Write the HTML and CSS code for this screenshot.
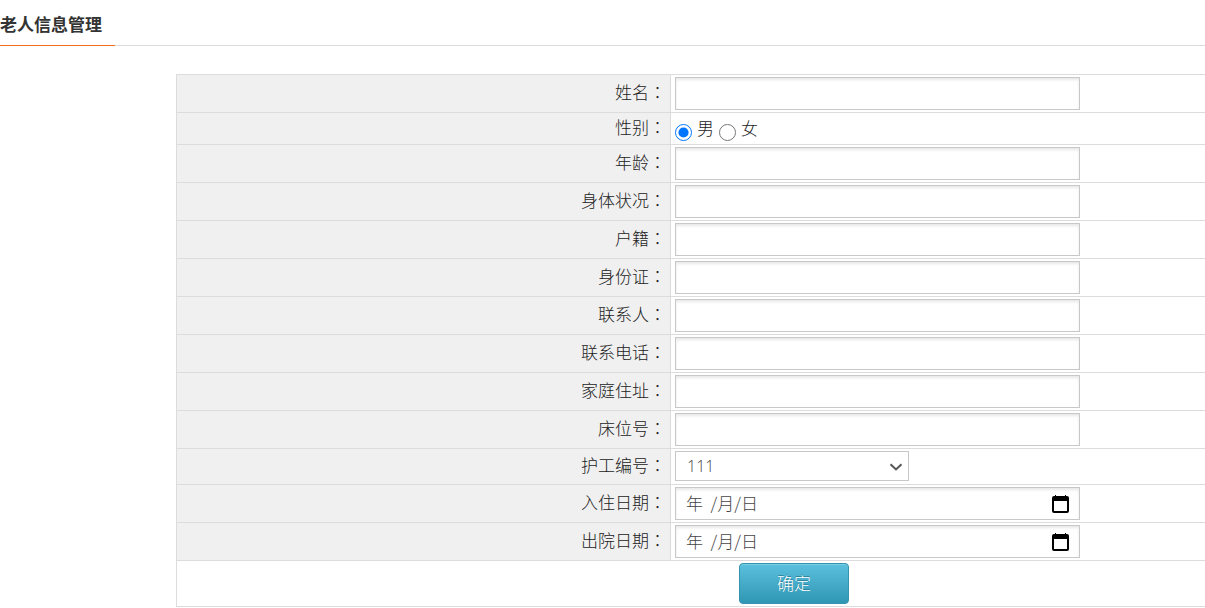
FILE: index.html
```html
<!DOCTYPE html>
<html lang="zh-CN">
<head>
<meta charset="utf-8">
<title>老人信息管理</title>
<link rel="stylesheet" href="styles.css">
</head>
<body>
<header class="page-head"><h1 class="page-title">老人信息管理</h1></header>
<form class="form-area">
<table class="form-table">
<tr><th class="label"><label for="name">姓名<span class="colon" lang="zh-TW">：</span></label></th><td><input class="field" id="name" type="text"></td></tr>
<tr class="radio-row"><th class="label"><span id="sex">性别<span class="colon" lang="zh-TW">：</span></span></th><td><div class="radios" role="radiogroup" aria-labelledby="sex"><input class="radio" id="male" type="radio" name="sex" checked><label for="male">男</label><input class="radio" id="female" type="radio" name="sex"><label for="female">女</label></div></td></tr>
<tr><th class="label"><label for="age">年龄<span class="colon" lang="zh-TW">：</span></label></th><td><input class="field" id="age" type="text"></td></tr>
<tr><th class="label"><label for="health">身体状况<span class="colon" lang="zh-TW">：</span></label></th><td><input class="field" id="health" type="text"></td></tr>
<tr><th class="label"><label for="origin">户籍<span class="colon" lang="zh-TW">：</span></label></th><td><input class="field" id="origin" type="text"></td></tr>
<tr><th class="label"><label for="idcard">身份证<span class="colon" lang="zh-TW">：</span></label></th><td><input class="field" id="idcard" type="text"></td></tr>
<tr><th class="label"><label for="contact">联系人<span class="colon" lang="zh-TW">：</span></label></th><td><input class="field" id="contact" type="text"></td></tr>
<tr><th class="label"><label for="phone">联系电话<span class="colon" lang="zh-TW">：</span></label></th><td><input class="field" id="phone" type="text"></td></tr>
<tr><th class="label"><label for="address">家庭住址<span class="colon" lang="zh-TW">：</span></label></th><td><input class="field" id="address" type="text"></td></tr>
<tr><th class="label"><label for="bed">床位号<span class="colon" lang="zh-TW">：</span></label></th><td><input class="field" id="bed" type="text"></td></tr>
<tr><th class="label"><label for="worker">护工编号<span class="colon" lang="zh-TW">：</span></label></th><td><div class="select-box"><select class="select" id="worker"><option>111</option></select><svg class="chevron" viewBox="0 0 14 8" aria-hidden="true"><path d="M1.500 1.200 7 6.400l5.500-5.200" fill="none" stroke="#555" stroke-width="2"/></svg></div></td></tr>
<tr><th class="label"><label for="checkin">入住日期<span class="colon" lang="zh-TW">：</span></label></th><td><div class="field date"><input class="date-text" id="checkin" type="text" value="年&nbsp; /月/日"><button class="pick" type="button" aria-label="选择入住日期"><svg class="cal" viewBox="0 0 17 19" aria-hidden="true"><path fill-rule="evenodd" d="M3 1h1v1h9V1h1v1h1q2 0 2 2v13q0 2-2 2H2q-2 0-2-2V4q0-2 2-2h1zM2 7v10h13V7z"/></svg></button></div></td></tr>
<tr><th class="label"><label for="checkout">出院日期<span class="colon" lang="zh-TW">：</span></label></th><td><div class="field date"><input class="date-text" id="checkout" type="text" value="年&nbsp; /月/日"><button class="pick" type="button" aria-label="选择出院日期"><svg class="cal" viewBox="0 0 17 19" aria-hidden="true"><path fill-rule="evenodd" d="M3 1h1v1h9V1h1v1h1q2 0 2 2v13q0 2-2 2H2q-2 0-2-2V4q0-2 2-2h1zM2 7v10h13V7z"/></svg></button></div></td></tr>
<tr><td class="actions" colspan="2"><button class="submit" type="submit">确定</button></td></tr>
</table>
</form>
</body>
</html>
```
FILE: styles.css
```css
* { box-sizing: border-box; }
body {
  margin: 0;
  background: #fff;
  color: #222;
  font: 300 17px/24px "Noto Sans CJK SC", sans-serif;
}
.page-head {
  display: flex;
  height: 46px;
  margin-bottom: 28px;
  box-shadow: inset 0 -1px #dcdcdc;
}
.page-title {
  width: 115px;
  margin: 0;
  padding-top: 12px;
  border-bottom: 1px solid #f26c1d;
  color: #333;
  font-size: 17px;
  line-height: 24px;
  font-weight: 700;
  white-space: nowrap;
}
.form-area { margin-left: 176px; overflow: hidden; }
/* The table is wider than its column and runs off the right edge. */
.form-table {
  width: 120%;
  min-width: 1236px;
  border-collapse: collapse;
  table-layout: fixed;
}
.form-table th,
.form-table td {
  padding: 2px 4px;
  border: 1px solid #dcdcdc;
  vertical-align: middle;
}
.form-table .label {
  width: 40%;
  padding: 0 4px 3px 5px;
  background: #f0f0f0;
  font-weight: 300;
  line-height: 24px;
  text-align: right;
}
.colon { font-family: "Noto Sans CJK TC", sans-serif; }
.field {
  display: block;
  width: 405px;
  height: 33px;
  padding: 0 10px;
  border: 1px solid #c8c8c8;
  background: #fff;
  box-shadow: inset 0 2px 3px #e8e8e8;
  color: #444;
  font: inherit;
}
.radio-row { height: 32px; }
.radios { display: flex; align-items: center; height: 26px; }
.radio { width: 17px; height: 17px; margin: 7px 5px 0 0; }
.radios label { margin-right: 5px; padding-bottom: 2px; }
.select-box { position: relative; width: 234px; height: 31px; }
.select {
  display: block;
  width: 100%;
  height: 30px;
  padding: 0 11px;
  appearance: none;
  border: 1px solid #c8c8c8;
  border-radius: 0;
  background: #fff;
  color: #444;
  font: 300 16px/24px "Open Sans", "Noto Sans CJK SC", sans-serif;
}
.chevron { position: absolute; top: 12px; right: 6px; width: 14px; height: 8px; pointer-events: none; }
.date { display: flex; align-items: center; }
.date-text {
  flex: 1;
  min-width: 0;
  padding: 0 0 2px;
  border: 0;
  background: none;
  color: inherit;
  font: inherit;
}
.pick { display: flex; padding: 0; border: 0; background: none; }
.cal { width: 17px; height: 19px; }
.form-table .actions { padding: 2px 0; text-align: center; }
.submit {
  display: block;
  width: 110px;
  height: 41px;
  margin: 0 auto;
  padding: 0 0 2px;
  border: 1px solid #3594ae;
  border-radius: 4px;
  background: linear-gradient(#5bc0de, #2f96b4);
  box-shadow: inset 0 1px #7accdf;
  color: #fff;
  font: inherit;
  text-shadow: 0 -1px #2b7f98;
}
```
